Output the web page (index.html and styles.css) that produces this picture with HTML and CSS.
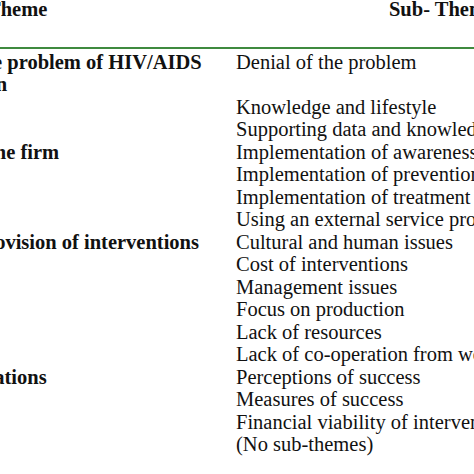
FILE: index.html
```html
<!DOCTYPE html>
<html lang="en">
<head>
<meta charset="utf-8">
<title>Themes and sub-themes</title>
<link rel="stylesheet" href="styles.css">
</head>
<body>
<div class="sheet">
  <div class="head">
    <div class="cell-left"><div class="line bold off-theme">Theme</div></div>
    <div class="cell-right head-right"><div class="line bold">Sub- Themes</div></div>
  </div>
  <div class="body">
    <div class="row">
      <div class="cell-left">
        <div class="line bold off-problem">The problem of HIV/AIDS</div>
        <div class="line bold off-population">in the population</div>
      </div>
      <div class="cell-right">
        <div class="line">Denial of the problem</div>
      </div>
    </div>
    <div class="row">
      <div class="cell-left"></div>
      <div class="cell-right">
        <div class="line">Knowledge and lifestyle</div>
        <div class="line">Supporting data and knowledge</div>
      </div>
    </div>
    <div class="row">
      <div class="cell-left">
        <div class="line bold off-firm">the firm</div>
      </div>
      <div class="cell-right">
        <div class="line">Implementation of awareness programmes</div>
        <div class="line">Implementation of prevention programmes</div>
        <div class="line">Implementation of treatment programmes</div>
        <div class="line">Using an external service provider</div>
      </div>
    </div>
    <div class="row">
      <div class="cell-left">
        <div class="line bold off-provision">provision of interventions</div>
      </div>
      <div class="cell-right">
        <div class="line">Cultural and human issues</div>
        <div class="line">Cost of interventions</div>
        <div class="line">Management issues</div>
        <div class="line">Focus on production</div>
        <div class="line">Lack of resources</div>
        <div class="line">Lack of co-operation from workers</div>
      </div>
    </div>
    <div class="row">
      <div class="cell-left">
        <div class="line bold off-evaluations">Evaluations</div>
      </div>
      <div class="cell-right">
        <div class="line">Perceptions of success</div>
        <div class="line">Measures of success</div>
        <div class="line">Financial viability of interventions</div>
      </div>
    </div>
    <div class="row">
      <div class="cell-left"></div>
      <div class="cell-right">
        <div class="line">(No sub-themes)</div>
      </div>
    </div>
  </div>
</div>
</body>
</html>
```
FILE: styles.css
```css
html, body {
  margin: 0;
  padding: 0;
  background: #ffffff;
  overflow: hidden;
}

.sheet {
  width: 656px;
  font-family: "Liberation Serif", "Times New Roman", serif;
  font-size: 20.5px;
  line-height: 22.5px;
  color: #111111;
}

.head,
.row {
  display: grid;
  grid-template-columns: 236px 420px;
}

.head {
  margin-top: -2px;
  padding-bottom: 26.5px;
  border-bottom: 2px solid #3f8a3f;
}

.body {
  padding-top: 1.5px;
}

.head-right {
  text-align: center;
}

.line {
  height: 22.5px;
  white-space: nowrap;
}

.bold {
  font-weight: bold;
}

.off-theme { margin-left: -13px; }
.off-problem { margin-left: -32px; }
.off-population { margin-left: -142px; }
.off-firm { margin-left: -12px; }
.off-provision { margin-left: -25px; }
.off-evaluations { margin-left: -57px; }
```
